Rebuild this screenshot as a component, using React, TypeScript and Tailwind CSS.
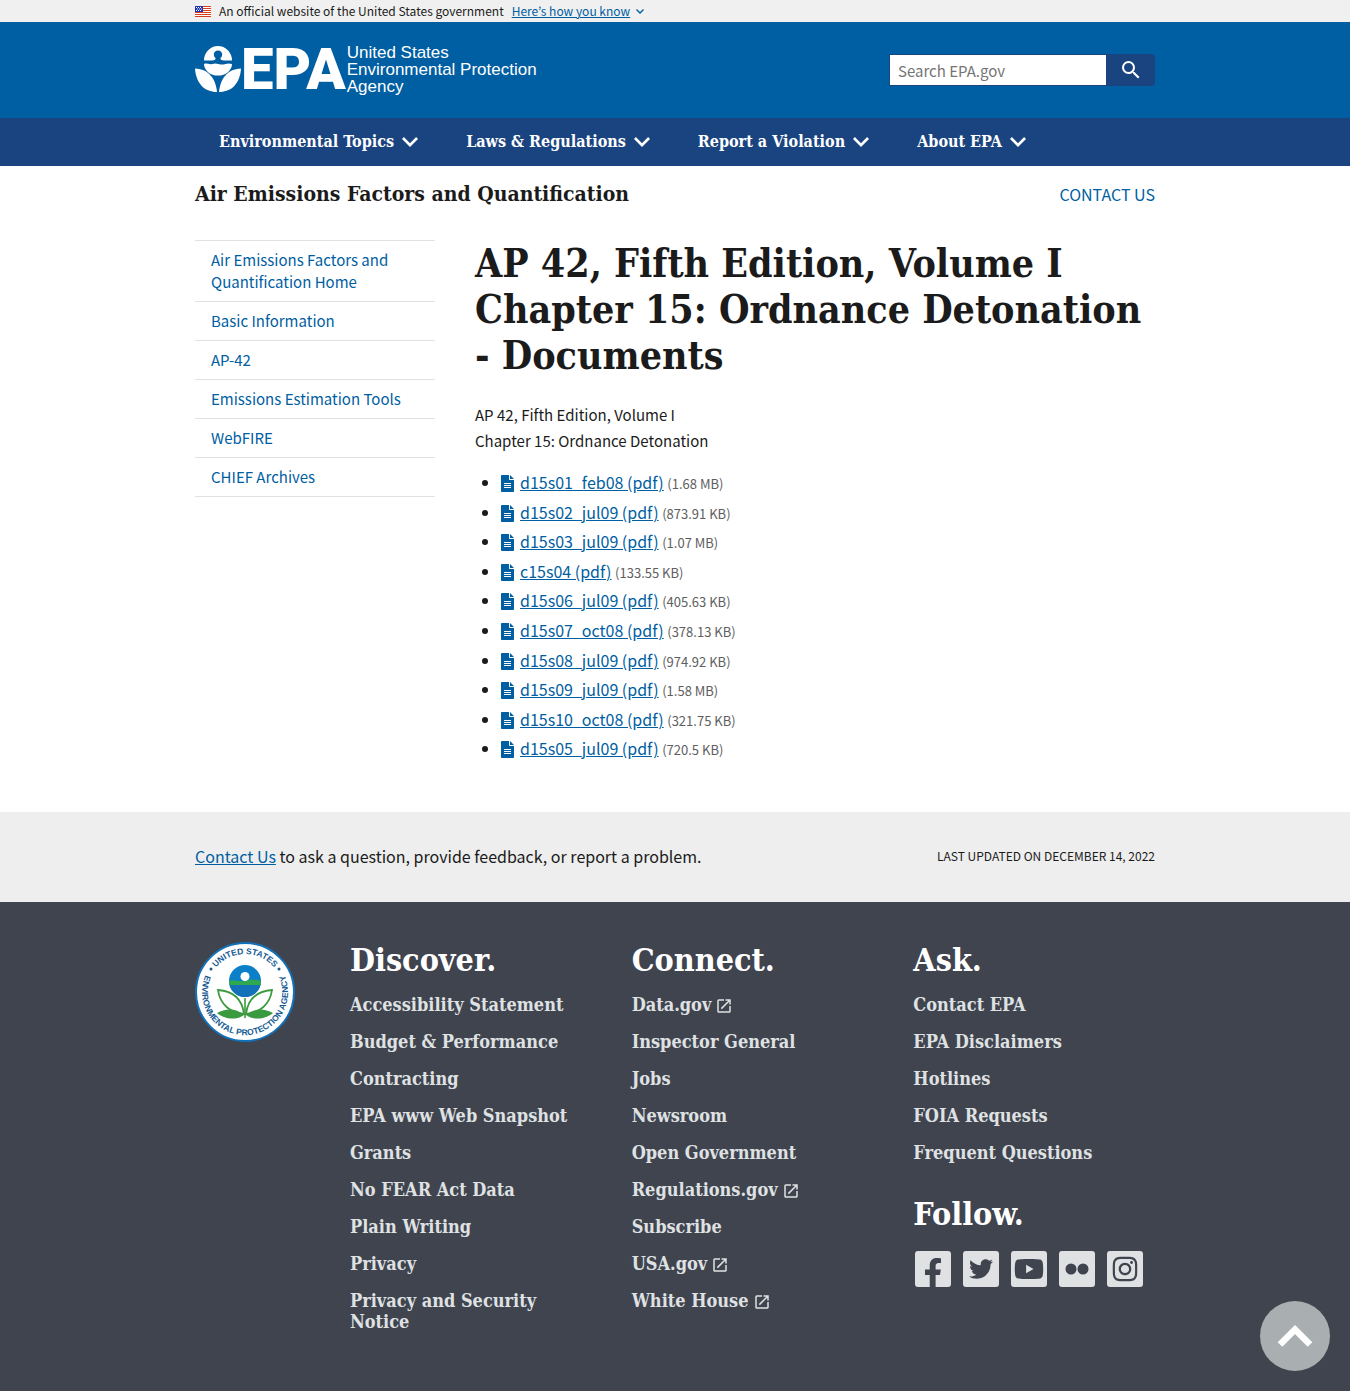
import type { ReactNode } from "react";
import { FaFacebookF, FaInstagram, FaTwitter, FaYoutube } from "react-icons/fa";
import { MdOpenInNew, MdSearch } from "react-icons/md";

const SANS = "font-['Noto_Sans_CJK_KR',sans-serif]";
const SERIF = "font-['DejaVu_Serif_Condensed','DejaVu_Serif',serif]";

const topics = ["Environmental Topics", "Laws & Regulations", "Report a Violation", "About EPA"];

const sideLinks = [
  "Air Emissions Factors and Quantification Home",
  "Basic Information",
  "AP-42",
  "Emissions Estimation Tools",
  "WebFIRE",
  "CHIEF Archives",
];

const documents = [
  { name: "d15s01_feb08 (pdf)", size: "(1.68 MB)" },
  { name: "d15s02_jul09 (pdf)", size: "(873.91 KB)" },
  { name: "d15s03_jul09 (pdf)", size: "(1.07 MB)" },
  { name: "c15s04 (pdf)", size: "(133.55 KB)" },
  { name: "d15s06_jul09 (pdf)", size: "(405.63 KB)" },
  { name: "d15s07_oct08 (pdf)", size: "(378.13 KB)" },
  { name: "d15s08_jul09 (pdf)", size: "(974.92 KB)" },
  { name: "d15s09_jul09 (pdf)", size: "(1.58 MB)" },
  { name: "d15s10_oct08 (pdf)", size: "(321.75 KB)" },
  { name: "d15s05_jul09 (pdf)", size: "(720.5 KB)" },
];

const discover = [
  "Accessibility Statement",
  "Budget & Performance",
  "Contracting",
  "EPA www Web Snapshot",
  "Grants",
  "No FEAR Act Data",
  "Plain Writing",
  "Privacy",
  "Privacy and Security Notice",
];

const connect = [
  "Data.gov",
  "Inspector General",
  "Jobs",
  "Newsroom",
  "Open Government",
  "Regulations.gov",
  "Subscribe",
  "USA.gov",
  "White House",
];

const external = ["Data.gov", "Regulations.gov", "USA.gov", "White House"];

const ask = ["Contact EPA", "EPA Disclaimers", "Hotlines", "FOIA Requests", "Frequent Questions"];

function Chevron({ className }: { className: string }) {
  return (
    <svg viewBox="6 8.59 12 7.41" className={className} fill="currentColor" aria-hidden="true">
      <path d="M16.59 8.59 12 13.17 7.41 8.59 6 10l6 6 6-6z" />
    </svg>
  );
}

function Flag() {
  return (
    <svg viewBox="0 0 16 11" className="h-[11px] w-4" aria-hidden="true">
      <path fill="#fff" d="M0 0h16v11H0z" />
      <path
        fill="#db3e1f"
        d="M0 0h16v1H0zM0 2h16v1H0zM0 4h16v1H0zM0 6h16v1H0zM0 8h16v1H0zM0 10h16v1H0z"
      />
      <path fill="#1e33b1" d="M0 0h8v6H0z" />
      <path
        fill="#fff"
        d="M1 1h1v1H1zM3 1h1v1H3zM5 1h1v1H5zM2 2.500h1v1H2zM4 2.500h1v1H4zM6 2.500h1v1H6zM1 4h1v1H1zM3 4h1v1H3zM5 4h1v1H5z"
      />
    </svg>
  );
}

function FlowerMark() {
  return (
    <svg viewBox="0 0 46 46" className="size-[46px]" fill="#fff" aria-hidden="true">
      <path d="M9 14.500a14 14.500 0 0 1 28 0h-8c-2.500 0-4-1-3.500-2.500a4.200 4.200 0 1 0-5 0c.5 1.500-1 2.500-3.500 2.500z" />
      <path d="M9 18c3-1.200 5 .8 8 0s4-.8 6.500 0 4.500.800 7 0 4-.6 6.500 0a14 11.500 0 0 1-28 0z" />
      <path d="M0 22.500c11 .3 20.500 7.500 22 23.500C9 46 1 37 0 22.500z" />
      <path d="M46 22.500c-11 .3-20.500 7.500-22 23.500C37 46 45 37 46 22.500z" />
    </svg>
  );
}

function FileIcon() {
  return (
    <svg viewBox="0 0 13 17" className="mr-[6px] inline h-[17px] w-[13px] align-[-3px]" aria-hidden="true">
      <path fill="#005ea2" d="M0 .8A.8.8 0 0 1 .8 0H8v4.200c0 .5.300.800.800.800H13v11.200a.8.8 0 0 1-.8.8H.8a.8.8 0 0 1-.8-.8z" />
      <path fill="#005ea2" d="M9 0 13 4H9z" />
      <path fill="#fff" d="M3 8h7v1H3zM3 10h7v1H3zM3 12h7v1H3z" />
    </svg>
  );
}

function Seal() {
  return (
    <svg viewBox="0 0 100 100" className="size-[100px]" role="img" aria-label="EPA seal">
      <circle cx="50" cy="50" r="49" fill="#fff" stroke="#1371b8" strokeWidth="2" />
      <defs>
        <path id="seal-top" d="M12 50a38 38 0 0 1 76 0" />
        <path id="seal-bottom" d="M13.300 27.800A43 43 0 1 0 86.700 27.800" />
      </defs>
      <g fill="#155a94" fontFamily="'Liberation Sans', sans-serif" fontWeight="700" fontSize="8.500">
        <text textAnchor="middle">
          <textPath href="#seal-top" startOffset="50%">UNITED STATES</textPath>
        </text>
        <text textAnchor="middle">
          <textPath href="#seal-bottom" startOffset="50%">ENVIRONMENTAL PROTECTION AGENCY</textPath>
        </text>
      </g>
      <circle cx="16" cy="27" r="1.500" fill="#155a94" />
      <circle cx="84" cy="27" r="1.500" fill="#155a94" />
      <circle cx="50" cy="39" r="16" fill="#0b7fc7" />
      <path fill="#2fa84f" d="M34.200 39c5-2 9 1 15 0s11-2 16.700 0v4H34.200z" />
      <path fill="#1371b8" d="M34.500 43h31a16 16 0 0 1-31 0z" />
      <circle cx="50" cy="34.500" r="4.500" fill="#fff" />
      <path stroke="#3a9a3f" strokeWidth="1.600" d="M50 56v20" />
      <g fill="none" stroke="#3a9a3f" strokeWidth="1.800">
        <path d="M23 48c14 1 24 8 26 24C36 71 25 63 23 48z" />
        <path d="M77 48c-14 1-24 8-26 24C64 71 75 63 77 48z" />
      </g>
      <path fill="#3a9a3f" d="M22 71c9-5 19-5 27 2-8 6-20 4-27-2zM78 71c-9-5-19-5-27 2 8 6 20 4 27-2z" />
    </svg>
  );
}

function FooterColumn({ title, links, children }: { title: string; links: string[]; children?: ReactNode }) {
  return (
    <div>
      <h2 className="text-[32px] leading-[42px] font-bold text-white">{title}</h2>
      <ul className="mt-[13px] flex flex-col gap-4 text-[18px] leading-[21px] font-bold text-[#dfe1e2]">
        {links.map((link) => (
          <li key={link}>
            <a href="#">
              {link}
              {external.includes(link) && <MdOpenInNew className="ml-1 inline size-[18px] align-[-4px]" />}
            </a>
          </li>
        ))}
      </ul>
      {children}
    </div>
  );
}

function Social({ label, children }: { label: string; children: ReactNode }) {
  return (
    <a
      href="#"
      aria-label={label}
      className="flex size-9 items-center justify-center overflow-hidden rounded-[3px] bg-[#dfe1e2] text-[#40444f]"
    >
      {children}
    </a>
  );
}

export default function App() {
  return (
    <div className={`${SANS} text-[15px] leading-[26px] text-[#1b1b1b]`}>
      <div className="bg-[#f0f0f0]">
        <div className="mx-auto flex max-w-5xl items-center px-8 text-[12px] leading-[22px]">
          <Flag />
          <p className="ml-2">An official website of the United States government</p>
          <button className="ml-2 flex items-center gap-[6px] text-[#005ea2]">
            <span className="underline">Here’s how you know</span>
            <Chevron className="h-[5px] w-2" />
          </button>
        </div>
      </div>

      <header>
        <div className="bg-[#005ea2]">
          <div className="mx-auto flex h-24 max-w-5xl items-center justify-between px-8">
            <a href="#" className="flex items-center pb-[2px] text-white">
              <FlowerMark />
              <span className="font-['Roboto',sans-serif] text-[58px] leading-[48px] font-black">EPA</span>
              <span className="ml-px font-['Liberation_Sans',sans-serif] text-[17px] leading-[17px]">
                United States
                <br />
                Environmental Protection
                <br />
                Agency
              </span>
            </a>
            <form className="flex" role="search">
              <input
                type="search"
                aria-label="Search EPA.gov"
                placeholder="Search EPA.gov"
                className="h-8 w-[218px] border border-[#1a4480] bg-white px-2 text-[15px] placeholder:text-[#757575]"
              />
              <button aria-label="Search" className="flex w-12 items-center justify-center rounded-r bg-[#1a4480] text-white">
                <MdSearch className="size-6" />
              </button>
            </form>
          </div>
        </div>
        <nav className="bg-[#1a4480]">
          <ul className={`${SERIF} mx-auto flex max-w-5xl px-8 text-[16px] leading-[48px] font-bold text-white`}>
            {topics.map((topic) => (
              <li key={topic}>
                <button className="flex items-center gap-2 px-6">
                  {topic}
                  <Chevron className="h-[10px] w-4" />
                </button>
              </li>
            ))}
          </ul>
        </nav>
      </header>

      <main className="mx-auto max-w-5xl px-8">
        <div className="flex items-center justify-between pt-[15px]">
          <h2 className={`${SERIF} text-[21px] font-bold`}>Air Emissions Factors and Quantification</h2>
          <a href="#" className="text-[16px] text-[#005ea2]">
            CONTACT US
          </a>
        </div>
        <div className="mt-[33px] flex items-start gap-10">
          <nav className="w-60 shrink-0">
            <ul className="border-b border-[#dfe1e2] leading-[22px] text-[#005ea2]">
              {sideLinks.map((link) => (
                <li key={link} className="border-t border-[#dfe1e2]">
                  <a href="#" className="block px-4 py-2">
                    {link}
                  </a>
                </li>
              ))}
            </ul>
          </nav>
          <article className="grow pb-[50px]">
            <h1 className={`${SERIF} text-[39px] leading-[46px] font-bold`}>
              AP 42, Fifth Edition, Volume I Chapter 15: Ordnance Detonation - Documents
            </h1>
            <p className="mt-6">
              AP 42, Fifth Edition, Volume I<br />
              Chapter 15: Ordnance Detonation
            </p>
            <ul className="mt-4 flex list-disc flex-col gap-1 pl-[26px] text-[16px] leading-[1.6]">
              {documents.map((doc) => (
                <li key={doc.name}>
                  <FileIcon />
                  <a href="#" className="text-[#005ea2] underline">
                    {doc.name}
                  </a>{" "}
                  <span className="text-[13px] text-[#5e5e5e]">{doc.size}</span>
                </li>
              ))}
            </ul>
          </article>
        </div>
      </main>

      <section className="bg-[#eeeeee]">
        <div className="mx-auto flex max-w-5xl items-center justify-between px-8 pt-[31px] pb-[33px]">
          <p className="text-[16px]">
            <a href="#" className="text-[#005ea2] underline">
              Contact Us
            </a>{" "}
            to ask a question, provide feedback, or report a problem.
          </p>
          <p className="text-[12px]">LAST UPDATED ON DECEMBER 14, 2022</p>
        </div>
      </section>

      <footer className="bg-[#40444f]">
        <div className={`${SERIF} mx-auto grid max-w-5xl grid-cols-[115px_repeat(3,1fr)] gap-x-10 px-8 pt-[37px] pb-[59px]`}>
          <div className="pt-[3px]">
            <Seal />
          </div>
          <FooterColumn title="Discover." links={discover} />
          <FooterColumn title="Connect." links={connect} />
          <FooterColumn title="Ask." links={ask}>
            <h2 className="mt-[30px] text-[32px] leading-[42px] font-bold text-white">Follow.</h2>
            <div className="mt-4 ml-[2px] flex gap-3">
              <Social label="Facebook">
                <FaFacebookF className="mt-2 h-[30px] w-5" />
              </Social>
              <Social label="Twitter">
                <FaTwitter className="size-6" />
              </Social>
              <Social label="YouTube">
                <FaYoutube className="size-[30px]" />
              </Social>
              <Social label="Flickr">
                <svg viewBox="0 0 24 12" className="w-6" fill="currentColor" aria-hidden="true">
                  <circle cx="6" cy="6" r="5.500" />
                  <circle cx="18" cy="6" r="5.500" />
                </svg>
              </Social>
              <Social label="Instagram">
                <FaInstagram className="size-7" />
              </Social>
            </div>
          </FooterColumn>
        </div>
      </footer>

      <a
        href="#"
        aria-label="Back to top"
        className="fixed right-5 bottom-5 flex size-[70px] items-center justify-center rounded-full bg-[#a9aeb1]"
      >
        <svg viewBox="0 0 36 24" className="w-9" fill="none" stroke="#fff" strokeWidth="6.500" aria-hidden="true">
          <path d="M3 20.500 18 5.500l15 15" />
        </svg>
      </a>
    </div>
  );
}
